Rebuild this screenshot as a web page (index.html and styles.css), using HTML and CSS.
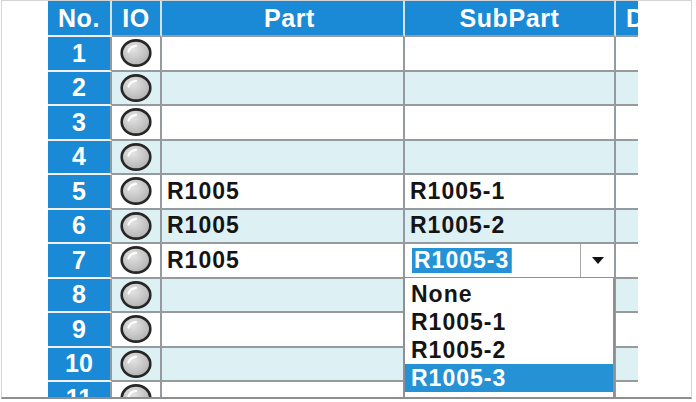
FILE: index.html
```html
<!DOCTYPE html>
<html lang="en">
<head>
  <meta charset="UTF-8">
  <title>Part Assignment</title>
  <link rel="stylesheet" href="styles.css">
</head>
<body>
  <!-- radio bulb used in the IO column -->
  <svg class="defs" width="0" height="0">
    <defs>
      <radialGradient id="bulb" cx="40%" cy="35%" r="70%">
        <stop offset="0" stop-color="#e4e4e4"/>
        <stop offset="1" stop-color="#b0b0b0"/>
      </radialGradient>
      <symbol id="radio" viewBox="0 0 32 28">
        <ellipse cx="16" cy="14" rx="14.3" ry="12.6" fill="url(#bulb)" stroke="#262626" stroke-width="2.6"/>
        <path d="M8.5 12.5 Q10 7.5 16 6.8" fill="none" stroke="#fff" stroke-width="2.2" stroke-linecap="round"/>
      </symbol>
    </defs>
  </svg>

  <div class="frame">
    <div class="viewport">
      <table class="grid">
        <colgroup>
          <col class="c-no"><col class="c-io"><col class="c-part"><col class="c-sub"><col class="c-desc">
        </colgroup>
        <thead>
          <tr><th class="no">No.</th><th>IO</th><th class="part">Part</th><th>SubPart</th><th class="desc">Desc</th></tr>
        </thead>
        <tbody>
          <tr><td class="no">1</td><td class="io"><svg class="radio"><use href="#radio"/></svg></td><td></td><td></td><td></td></tr>
          <tr><td class="no">2</td><td class="io"><svg class="radio"><use href="#radio"/></svg></td><td></td><td></td><td></td></tr>
          <tr><td class="no">3</td><td class="io"><svg class="radio"><use href="#radio"/></svg></td><td></td><td></td><td></td></tr>
          <tr><td class="no">4</td><td class="io"><svg class="radio"><use href="#radio"/></svg></td><td></td><td></td><td></td></tr>
          <tr><td class="no">5</td><td class="io"><svg class="radio"><use href="#radio"/></svg></td><td>R1005</td><td>R1005-1</td><td></td></tr>
          <tr><td class="no">6</td><td class="io"><svg class="radio"><use href="#radio"/></svg></td><td>R1005</td><td>R1005-2</td><td></td></tr>
          <tr>
            <td class="no">7</td><td class="io"><svg class="radio"><use href="#radio"/></svg></td><td>R1005</td>
            <td class="edit">
              <div class="combo">
                <span class="combo-text"><span class="sel">R1005-3</span></span>
                <span class="combo-btn"><svg width="12" height="7" viewBox="0 0 12 7"><path d="M0 0 H12 L6 7 Z" fill="#111"/></svg></span>
              </div>
              <ul class="list">
                <li>None</li>
                <li>R1005-1</li>
                <li>R1005-2</li>
                <li class="on">R1005-3</li>
              </ul>
            </td>
            <td></td>
          </tr>
          <tr><td class="no">8</td><td class="io"><svg class="radio"><use href="#radio"/></svg></td><td></td><td></td><td></td></tr>
          <tr><td class="no">9</td><td class="io"><svg class="radio"><use href="#radio"/></svg></td><td></td><td></td><td></td></tr>
          <tr><td class="no">10</td><td class="io"><svg class="radio"><use href="#radio"/></svg></td><td></td><td></td><td></td></tr>
          <tr><td class="no">11</td><td class="io"><svg class="radio"><use href="#radio"/></svg></td><td></td><td></td><td></td></tr>
        </tbody>
      </table>
    </div>
  </div>
</body>
</html>
```

FILE: styles.css
```css
body {
  margin: 0;
  background-color: #FFFFFF;
  font-family: "Liberation Sans", Arial, sans-serif;
}
.defs {
  position: absolute;
}
.frame {
  margin-left: 1px;
  width: 689px;
  height: 396px;
  border: 1px solid #D4D4D4;
  border-bottom: 2px solid #8E8E8E;
}
.viewport {
  margin-left: 46px;
  width: 590px;
  height: 396px;
  overflow: hidden;
}
.grid {
  border-collapse: separate;
  border-spacing: 0;
  table-layout: fixed;
  width: 688px;
}
.c-no { width: 64px; }
.c-io { width: 50px; }
.c-part { width: 243px; }
.c-sub { width: 211px; }
.c-desc { width: 120px; }

th {
  height: 34px;
  padding: 0;
  background-color: #1A8AD6; /* header blue */
  color: #FFFFFF;
  font-size: 25px;
  letter-spacing: 0.6px;
  border-right: 2px solid #D3E3EE;
  border-bottom: 2px solid #949A9E;
}
th.no {
  border-bottom-color: #F7EFE9;
}
th.part {
  padding-left: 14px;
}
th.desc {
  text-align: left;
  padding-left: 10px;
  white-space: nowrap;
  overflow: hidden;
}
td {
  height: 32.5px;
  padding: 0 0 0 5px;
  color: #141414;
  font-size: 23px;
  font-weight: bold;
  letter-spacing: 1px;
  white-space: nowrap;
  border-right: 2px solid #949A9E;
  border-bottom: 2px solid #949A9E;
}
tbody tr:nth-child(even) td {
  background-color: #DDF0F4; /* light cyan stripe */
}
tbody td.no,
tbody tr:nth-child(even) td.no {
  padding: 0;
  text-align: center;
  background-color: #1A8AD6;
  color: #FFFFFF;
  font-size: 25px;
  letter-spacing: 0;
  border-bottom-color: #F7EFE9;
}
td.io {
  padding: 0;
  text-align: center;
}
.radio {
  display: block;
  margin: 0 auto;
  width: 32px;
  height: 28px;
}

/* in-place editor on row 7 */
td.edit {
  position: relative;
  padding: 0;
  background-color: #FFFFFF;
}
.combo {
  display: flex;
  height: 32.5px;
}
.combo-text {
  flex: 1;
  display: flex;
  align-items: center;
  padding-left: 7px;
}
.sel {
  padding: 0 2px;
  line-height: 25px;
  background-color: #2592D6;
  color: #FFFFFF;
  border-right: 1px solid #E8823A; /* caret */
}
.combo-btn {
  width: 33px;
  display: flex;
  align-items: center;
  justify-content: center;
  border-left: 1px solid #A8A8A8;
}
.list {
  position: absolute;
  left: -2px;
  top: 100%;
  width: 208px;
  margin: 0;
  padding: 2px 0 6px;
  list-style: none;
  background-color: #FFFFFF;
  border: 2px solid #8D9194;
  border-top-width: 1px;
  z-index: 2;
}
.list li {
  height: 28px;
  line-height: 28px;
  padding-left: 6px;
}
.list li.on {
  background-color: #2592D6;
  color: #FFFFFF;
}
```
